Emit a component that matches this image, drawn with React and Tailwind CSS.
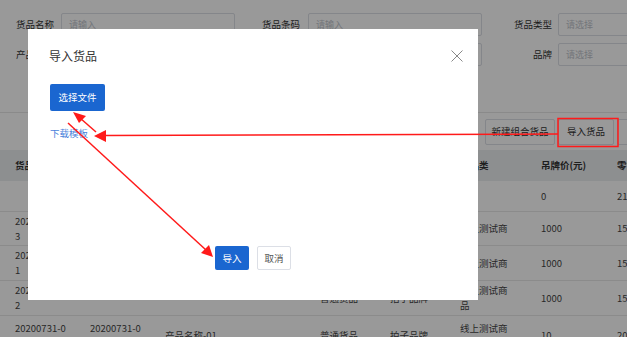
import React from 'react'

const font = { fontFamily: '"Noto Sans CJK SC", "Noto Sans", sans-serif' }

const rows = [
  { h: 'h-[31px]', cells: ['', '', '', '', '', '', '0', '210'] },
  { h: 'h-[34px]', cells: ['2020073\n3', '', '', '', '', '线上测试商', '1000', '150'] },
  { h: 'h-[35px]', cells: ['2020073\n1', '', '', '', '', '线上测试商', '1000', '150'] },
  { h: 'h-[35px]', cells: ['2020073\n2', '', '', '普通货品', '拍子品牌', '线上测试商\n品', '1000', '150'] },
  { h: 'h-[40px]', cells: ['20200731-0\n1', '20200731-0\n1', '产品名称-01', '普通货品', '拍子品牌', '线上测试商\n品', '10', '20'] },
]

const colW = ['w-[75px]', 'w-[75px]', 'w-[155px]', 'w-[70px]', 'w-[70px]', 'w-[81px]', 'w-[76px]', 'w-[40px]']

const Field = ({ label, labelW, gap, inputW, placeholder }) => (
  <div className="flex items-center">
    <span className={`${labelW} text-right text-[9.5px] text-[#333]`}>{label}</span>
    <div className={`${gap} ${inputW} h-[23px] border border-[#dcdfe6] rounded-[2px] flex items-center px-[7px] text-[9px] text-[#c0c4cc]`}>
      {placeholder}
    </div>
  </div>
)

export default function App() {
  return (
    <div className="relative w-[627px] h-[337px] overflow-hidden bg-white" style={font}>
      {/* page behind the dialog */}
      <div className="flex flex-col">
        <div className="pt-[13px] flex flex-col gap-[7px] h-[113px] border-b border-[#e6e6e6]">
          <div className="flex">
            <Field label="货品名称" labelW="w-[54px]" gap="ml-[7px]" inputW="w-[174px]" placeholder="请输入" />
            <Field label="货品条码" labelW="w-[65px]" gap="ml-[8px]" inputW="w-[174px]" placeholder="请输入" />
            <Field label="货品类型" labelW="w-[70px]" gap="ml-[6px]" inputW="w-[120px]" placeholder="请选择" />
          </div>
          <div className="flex">
            <Field label="产品名称" labelW="w-[54px]" gap="ml-[7px]" inputW="w-[174px]" placeholder="请输入" />
            <Field label="产品编码" labelW="w-[65px]" gap="ml-[8px]" inputW="w-[174px]" placeholder="请输入" />
            <Field label="品牌" labelW="w-[70px]" gap="ml-[6px]" inputW="w-[120px]" placeholder="请选择" />
          </div>
        </div>
        <div className="h-[37px] flex items-center justify-end gap-[3px] mr-[-20px]">
          <div className="w-[70px] h-[26px] border border-[#dcdfe6] rounded-[2px] flex items-center justify-center text-[9.5px] text-[#333]">新建组合货品</div>
          <div className="w-[56px] h-[26px] border border-[#dcdfe6] rounded-[2px] flex items-center justify-center text-[9.5px] text-[#333]">导入货品</div>
          <div className="w-[30px] h-[26px] border border-[#dcdfe6] rounded-[2px]" />
        </div>
        <div className="flex h-[31px] items-center bg-[#eceef1] pl-[15px] text-[9.5px] font-semibold text-[#333] whitespace-nowrap">
          {['货品编码', '货品条码', '产品名称', '货品类型', '品牌', '商品类', '吊牌价(元)', '零售价'].map((t, i) => (
            <span key={i} className={`${colW[i]} shrink-0 overflow-hidden`}>{t}</span>
          ))}
        </div>
        {rows.map((r, ri) => (
          <div key={ri} className={`flex ${r.h} items-center border-b border-[#e8e8e8] pl-[15px] text-[9.5px] text-[#444]`}>
            {r.cells.map((c, ci) => (
              <span key={ci} className={`${colW[ci]} shrink-0 whitespace-pre-line leading-[15px] overflow-hidden`}>{c}</span>
            ))}
          </div>
        ))}
      </div>

      {/* overlay */}
      <div className="absolute inset-0 bg-black/40" />

      {/* dialog */}
      <div className="absolute left-[28px] top-[29px] w-[450px] h-[271px] bg-white flex flex-col">
        <div className="flex items-center justify-between pl-[21px] pr-[15px] pt-[18px]">
          <span className="text-[12px] text-[#333] leading-[18px]">导入货品</span>
          <svg width="12" height="12" viewBox="0 0 12 12" className="text-[#888]">
            <path d="M0.5 0.5 L11.5 11.5 M11.5 0.5 L0.5 11.5" stroke="currentColor" strokeWidth="1" />
          </svg>
        </div>
        <div className="pl-[22px] pt-[19px] flex flex-col items-start">
          <div className="w-[55px] h-[27px] bg-[#1a66d0] rounded-[2px] flex items-center justify-center text-[9.5px] text-white">选择文件</div>
          <span className="mt-[15px] text-[9.5px] text-[#4a7fdb] leading-[14px]">下载模板</span>
        </div>
        <div className="mt-auto mb-[30px] flex justify-center gap-[8px]">
          <div className="w-[34px] h-[24px] bg-[#1a66d0] rounded-[2px] flex items-center justify-center text-[9.5px] text-white">导入</div>
          <div className="w-[34px] h-[24px] border border-[#dcdfe6] rounded-[2px] flex items-center justify-center text-[9.5px] text-[#555]">取消</div>
        </div>
      </div>

      {/* red annotations */}
      <svg className="absolute inset-0" width="627" height="337" viewBox="0 0 627 337">
        <rect x="558" y="118.5" width="60" height="28" fill="none" stroke="#ff1a1a" strokeWidth="1.5" />
        <line x1="558" y1="134" x2="104" y2="135.5" stroke="#ff1a1a" strokeWidth="1.5" />
        <polygon points="94,136 106,130 106,142" fill="#ff1a1a" />
        <line x1="96" y1="132" x2="80" y2="118" stroke="#ff1a1a" strokeWidth="1.5" />
        <polygon points="73,112 86,116 79,123" fill="#ff1a1a" />
        <line x1="68" y1="123" x2="206" y2="250" stroke="#ff1a1a" strokeWidth="1.5" />
        <polygon points="213,257 201,253 209,245" fill="#ff1a1a" />
      </svg>
    </div>
  )
}
